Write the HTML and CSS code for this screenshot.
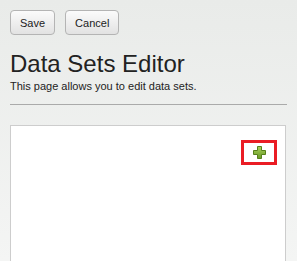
FILE: index.html
```html
<!DOCTYPE html>
<html lang="en">
<head>
  <meta charset="UTF-8" />
  <title>Data Sets Editor</title>
  <link rel="stylesheet" href="styles.css">
</head>
<body>
  <div class="page">

    <!-- Toolbar -->
    <div class="toolbar">
      <button class="btn">Save</button>
      <button class="btn">Cancel</button>
    </div>

    <!-- Header -->
    <div class="header">
      <h1>Data Sets Editor</h1>
      <p>This page allows you to edit data sets.</p>
    </div>

    <!-- Editor panel -->
    <div class="panel">
      <div class="panel-actions">
        <span class="add-box">
          <svg class="add-icon" width="13" height="13" viewBox="0 0 13 13">
            <defs>
              <linearGradient id="plusFill" x1="0" y1="0" x2="0" y2="1">
                <stop offset="0" stop-color="#a6d05a" />
                <stop offset="1" stop-color="#6a9a25" />
              </linearGradient>
            </defs>
            <path d="M4.5 0.5h4v4h4v4h-4v4h-4v-4h-4v-4h4z" fill="url(#plusFill)" stroke="#56801a" stroke-width="1" />
          </svg>
        </span>
      </div>
    </div>

  </div>
</body>
</html>
```

FILE: styles.css
```css
/* ------------------------------------------------------------------
   Global
------------------------------------------------------------------ */
*, *::before, *::after { box-sizing: border-box; }
html, body {
  margin: 0;
  height: 100%;
  font-family: "Liberation Sans", Arial, sans-serif;
  color: #222;
  background: linear-gradient(180deg, #e9ebe9 0%, #f4f5f4 100%);
  overflow: hidden;
}

.page {
  padding: 10px 10px 0 10px;
  height: 100%;
  display: flex;
  flex-direction: column;
}

/* ------------------------------------------------------------------
   Toolbar buttons
------------------------------------------------------------------ */
.toolbar {
  display: flex;
  gap: 10px;
}
.btn {
  height: 25px;
  padding: 0 9px;
  font-family: inherit;
  font-size: 11px;
  color: #222;
  border: 1px solid #b4b4b4;
  border-radius: 4px;
  background: linear-gradient(180deg, #fbfbfb 0%, #ececec 60%, #e2e2e2 100%);
  cursor: pointer;
}

/* ------------------------------------------------------------------
   Header
------------------------------------------------------------------ */
.header {
  margin-top: 15px;
  padding-bottom: 11px;
  border-bottom: 1px solid #aaa;
}
.header h1 {
  margin: 0;
  font-size: 24px;
  font-weight: normal;
  line-height: 28px;
}
.header p {
  margin: 1px 0 0;
  font-size: 11px;
  line-height: 14px;
}

/* ------------------------------------------------------------------
   Panel
------------------------------------------------------------------ */
.panel {
  flex: 1;
  margin-top: 20px;
  margin-right: 1px;
  background: #fff;
  border: 1px solid #cdcdcd;
  border-bottom: none;
}
.panel-actions {
  display: flex;
  justify-content: flex-end;
  padding: 14px 8px 0 0;
}
.add-box {
  display: flex;
  align-items: center;
  justify-content: center;
  width: 36px;
  height: 25px;
  border: 3px solid #ea1c24;
}
```
